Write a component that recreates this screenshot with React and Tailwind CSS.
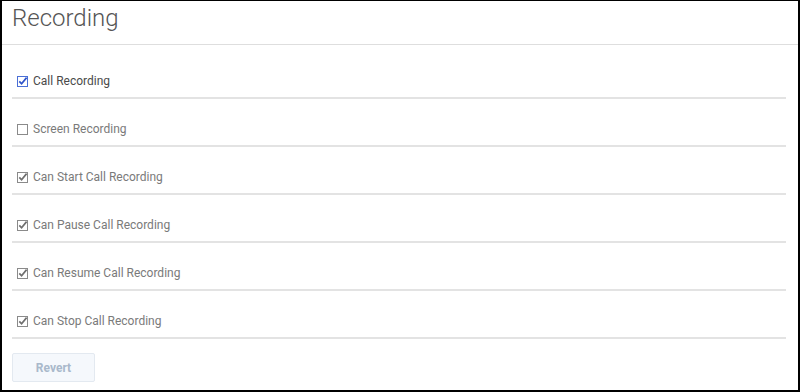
import React from 'react';

const items = [
  { label: 'Call Recording', checked: true, enabled: true },
  { label: 'Screen Recording', checked: false, enabled: false },
  { label: 'Can Start Call Recording', checked: true, enabled: false },
  { label: 'Can Pause Call Recording', checked: true, enabled: false },
  { label: 'Can Resume Call Recording', checked: true, enabled: false },
  { label: 'Can Stop Call Recording', checked: true, enabled: false },
];

function Box({ checked, enabled }) {
  const stroke = enabled ? '#4a6fd6' : '#8a8a8a';
  return (
    <svg width="11" height="11" viewBox="0 0 11 11" className="shrink-0">
      <rect x="0.5" y="0.5" width="10" height="10" fill="#fff" stroke={stroke} />
      {checked && (
        <path d="M2.3 5.3 L4.6 7.8 L9.6 1.6" fill="none" stroke={enabled ? '#2f54c9' : '#6f6f6f'} strokeWidth="1.7" />
      )}
    </svg>
  );
}

export default function App() {
  return (
    <div className="w-[800px] h-[392px] bg-white border-t border-l-2 border-r-2 border-b-2 border-black overflow-hidden font-['Roboto',sans-serif]">
      <header className="pl-[10px] pt-[2px] pb-[11px] border-b border-[#dedede]">
        <h1 className="text-[24px] font-light leading-[30px] text-[#555]">Recording</h1>
      </header>

      <div className="pl-[10px] pr-[12px] pt-[6px]">
        {items.map((it) => (
          <div key={it.label} className="flex items-center gap-[5px] pl-[5px] pt-[23px] pb-[9px] border-b-2 border-[#e3e3e3]">
            <Box checked={it.checked} enabled={it.enabled} />
            <span className={`text-[12px] leading-[14px] ${it.enabled ? 'text-[#4a4a4a]' : 'text-[#7a7a7a]'}`}>{it.label}</span>
          </div>
        ))}
        <button className="mt-[14px] w-[83px] h-[29px] bg-[#f5f8fc] border border-[#e3e9f0] rounded-[2px] text-[12px] font-bold text-[#a9b9cb]">
          Revert
        </button>
      </div>
    </div>
  );
}
